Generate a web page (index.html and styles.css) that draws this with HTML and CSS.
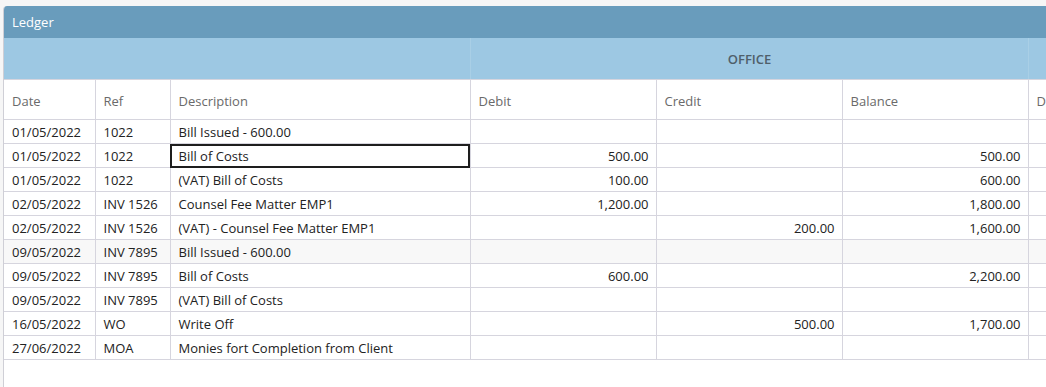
FILE: index.html
```html
<!DOCTYPE html>
<html>
<head>
<meta charset="utf-8">
<link rel="stylesheet" href="styles.css">
</head>
<body>
<div class="page">
  <div class="card">
    <div class="title">Ledger</div>
    <div class="grid-wrap">
      <table class="ledger">
        <colgroup>
          <col class="c-date"><col class="c-ref"><col class="c-desc">
          <col class="c-num"><col class="c-num"><col class="c-num"><col class="c-num">
        </colgroup>
        <thead>
          <tr class="band">
            <th colspan="3" class="band-blank"></th>
            <th colspan="3" class="band-label">OFFICE</th>
            <th class="band-blank"></th>
          </tr>
          <tr class="heads">
            <th>Date</th><th>Ref</th><th>Description</th>
            <th>Debit</th><th>Credit</th><th>Balance</th><th>Debit</th>
          </tr>
        </thead>
        <tbody>
          <tr><td>01/05/2022</td><td>1022</td><td>Bill Issued - 600.00</td><td></td><td></td><td></td><td></td></tr>
          <tr><td>01/05/2022</td><td>1022</td><td class="selected">Bill of Costs</td><td class="num">500.00</td><td></td><td class="num">500.00</td><td></td></tr>
          <tr><td>01/05/2022</td><td>1022</td><td>(VAT) Bill of Costs</td><td class="num">100.00</td><td></td><td class="num">600.00</td><td></td></tr>
          <tr><td>02/05/2022</td><td>INV 1526</td><td>Counsel Fee Matter EMP1</td><td class="num">1,200.00</td><td></td><td class="num">1,800.00</td><td></td></tr>
          <tr><td>02/05/2022</td><td>INV 1526</td><td>(VAT) - Counsel Fee Matter EMP1</td><td></td><td class="num">200.00</td><td class="num">1,600.00</td><td></td></tr>
          <tr class="hover"><td>09/05/2022</td><td>INV 7895</td><td>Bill Issued - 600.00</td><td></td><td></td><td></td><td></td></tr>
          <tr><td>09/05/2022</td><td>INV 7895</td><td>Bill of Costs</td><td class="num">600.00</td><td></td><td class="num">2,200.00</td><td></td></tr>
          <tr><td>09/05/2022</td><td>INV 7895</td><td>(VAT) Bill of Costs</td><td></td><td></td><td></td><td></td></tr>
          <tr><td>16/05/2022</td><td>WO</td><td>Write Off</td><td></td><td class="num">500.00</td><td class="num">1,700.00</td><td></td></tr>
          <tr><td>27/06/2022</td><td>MOA</td><td>Monies fort Completion from Client</td><td></td><td></td><td></td><td></td></tr>
        </tbody>
      </table>
    </div>
  </div>
</div>
</body>
</html>
```

FILE: styles.css
```css
html, body {
  margin: 0;
  padding: 0;
  background: #f6f6f6;
  overflow: hidden;
}
body {
  font-family: "Open Sans", "Noto Sans", "Liberation Sans", sans-serif;
  font-size: 13px;
  color: #333;
}
.page {
  padding: 6px 0 0 3px;
  height: 387px;
  box-sizing: border-box;
}
.card {
  width: 1200px;
  height: 100%;
  background: #fff;
  border-left: 1px solid #cfcfd6;
  border-top-left-radius: 4px;
  overflow: hidden;
}
.title {
  height: 32px;
  line-height: 32px;
  background: #699cbc;
  color: #fff;
  padding-left: 8px;
  font-size: 13px;
}
.grid-wrap {
  overflow: hidden;
}
.ledger {
  border-collapse: collapse;
  table-layout: fixed;
  width: 1209px;
}
.c-date { width: 91px; }
.c-ref { width: 75px; }
.c-desc { width: 300px; }
.c-num { width: 186px; }
.ledger th, .ledger td {
  border: 1px solid #d6d5de;
  padding: 0 7px 0 8px;
  white-space: nowrap;
  overflow: hidden;
  text-align: left;
}
.ledger tr > :first-child { border-left: none; }
.band th {
  height: 40px;
  background: #9dc8e3;
  border-color: #a9cfe6;
  border-top: none;
  border-bottom-color: #d6d5de;
  font-weight: 600;
  color: #4f5f6b;
  font-size: 13px;
  padding-top: 1px;
}
.band .band-label { text-align: center; }
.heads th {
  height: 37px;
  font-weight: normal;
  color: #6a6a6a;
  background: #fff;
  padding-top: 2px;
}
.ledger td {
  height: 23px;
  color: #222;
}
.ledger td.num { text-align: right; }
tr.hover td { background: #f8f8f8; }
.ledger td.selected {
  outline: 2px solid #1e1e1e;
  outline-offset: -2px;
}
```
